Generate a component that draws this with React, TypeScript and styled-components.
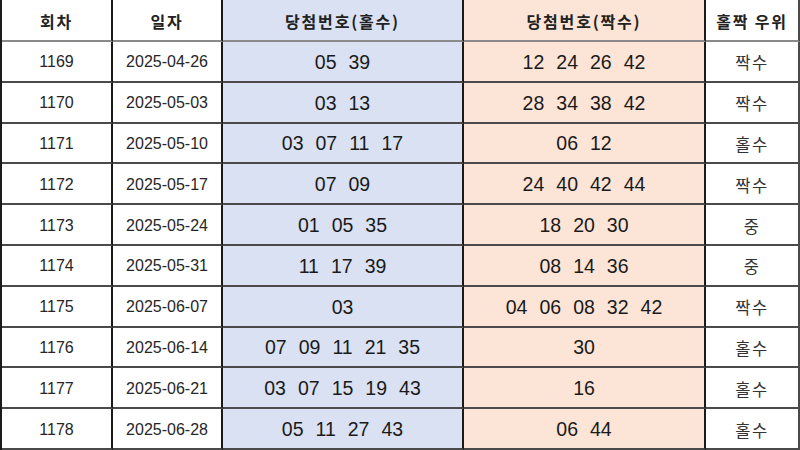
import * as React from 'react';
import styled, { createGlobalStyle } from 'styled-components';

type Tone = 'plain' | 'odd' | 'even';

interface Draw {
  round: number;
  date: string;
  odd: string[];
  even: string[];
  winner: string;
}

const draws: Draw[] = [
  { round: 1169, date: '2025-04-26', odd: ['05', '39'], even: ['12', '24', '26', '42'], winner: '짝수' },
  { round: 1170, date: '2025-05-03', odd: ['03', '13'], even: ['28', '34', '38', '42'], winner: '짝수' },
  { round: 1171, date: '2025-05-10', odd: ['03', '07', '11', '17'], even: ['06', '12'], winner: '홀수' },
  { round: 1172, date: '2025-05-17', odd: ['07', '09'], even: ['24', '40', '42', '44'], winner: '짝수' },
  { round: 1173, date: '2025-05-24', odd: ['01', '05', '35'], even: ['18', '20', '30'], winner: '중' },
  { round: 1174, date: '2025-05-31', odd: ['11', '17', '39'], even: ['08', '14', '36'], winner: '중' },
  { round: 1175, date: '2025-06-07', odd: ['03'], even: ['04', '06', '08', '32', '42'], winner: '짝수' },
  { round: 1176, date: '2025-06-14', odd: ['07', '09', '11', '21', '35'], even: ['30'], winner: '홀수' },
  { round: 1177, date: '2025-06-21', odd: ['03', '07', '15', '19', '43'], even: ['16'], winner: '홀수' },
  { round: 1178, date: '2025-06-28', odd: ['05', '11', '27', '43'], even: ['06', '44'], winner: '홀수' },
];

const tones: Record<Tone, string> = {
  plain: '#ffffff',
  odd: '#d9e1f2',
  even: '#fce4d6',
};

const GlobalStyle = createGlobalStyle`
  html, body {
    margin: 0;
    padding: 0;
    background: #ffffff;
  }
  body {
    font-family: "Liberation Sans", "Noto Sans CJK KR", sans-serif;
  }
`;

const Sheet = styled.div`
  display: grid;
  grid-template-columns: 111px 110px 241px 242px 1fr;
  grid-template-rows: 42px repeat(10, 1fr);
  width: 800px;
  height: 450px;
  box-sizing: border-box;
  border-left: 2px solid #1a1a1a;
  overflow: hidden;
`;

const Cell = styled.div<{ tone?: Tone; head?: boolean }>`
  display: flex;
  align-items: center;
  justify-content: center;
  box-sizing: border-box;
  padding-top: 2px;
  background: ${({ tone }) => tones[tone ?? 'plain']};
  border-right: 2px solid #1a1a1a;
  border-bottom: ${({ head }) => (head ? '2px solid #8a8a8a' : '2px solid #4a4a4a')};
  &:nth-child(5n) {
    border-right: 2px solid #4a4a4a;
  }
`;

const HeadText = styled.span`
  font-family: "Noto Sans CJK KR", sans-serif;
  font-weight: 700;
  font-size: 16px;
  letter-spacing: 1.8px;
  color: #222222;
`;

const PlainText = styled.span`
  font-family: "Liberation Sans", sans-serif;
  font-size: 16px;
  color: #262626;
`;

const Numbers = styled.div`
  display: flex;
  gap: 12px;
  font-family: "Liberation Sans", sans-serif;
  font-size: 19.5px;
  color: #1a1a1a;
`;

const Verdict = styled.span`
  font-family: "Noto Sans CJK KR", sans-serif;
  font-weight: 400;
  font-size: 16.5px;
  letter-spacing: 1.5px;
  color: #333333;
`;

const Balls: React.FC<{ values: string[] }> = ({ values }) => (
  <Numbers>
    {values.map((v, i) => (
      <span key={i}>{v}</span>
    ))}
  </Numbers>
);

const App: React.FC = () => {
  return (
    <>
      <GlobalStyle />
      <Sheet>
        <Cell head>
          <HeadText>회차</HeadText>
        </Cell>
        <Cell head>
          <HeadText>일자</HeadText>
        </Cell>
        <Cell head tone="odd">
          <HeadText>당첨번호(홀수)</HeadText>
        </Cell>
        <Cell head tone="even">
          <HeadText>당첨번호(짝수)</HeadText>
        </Cell>
        <Cell head>
          <HeadText>홀짝 우위</HeadText>
        </Cell>
        {draws.map((d) => (
          <React.Fragment key={d.round}>
            <Cell>
              <PlainText>{d.round}</PlainText>
            </Cell>
            <Cell>
              <PlainText>{d.date}</PlainText>
            </Cell>
            <Cell tone="odd">
              <Balls values={d.odd} />
            </Cell>
            <Cell tone="even">
              <Balls values={d.even} />
            </Cell>
            <Cell>
              <Verdict>{d.winner}</Verdict>
            </Cell>
          </React.Fragment>
        ))}
      </Sheet>
    </>
  );
};

export default App;
